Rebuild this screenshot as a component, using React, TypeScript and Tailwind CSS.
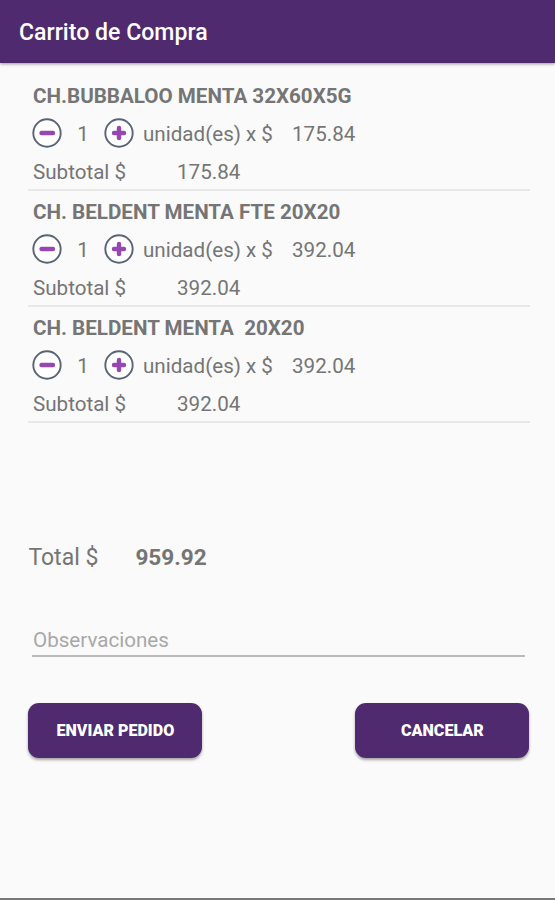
import { useState } from 'react';

type CartItem = {
    name: string;
    price: number;
    quantity: number;
};

const initialItems: CartItem[] = [
    { name: 'CH.BUBBALOO MENTA 32X60X5G', price: 175.84, quantity: 1 },
    { name: 'CH. BELDENT MENTA FTE 20X20', price: 392.04, quantity: 1 },
    { name: 'CH. BELDENT MENTA  20X20', price: 392.04, quantity: 1 },
];

const RoundIcon = ({ plus = false }: { plus?: boolean }) => (
    <svg viewBox="0 0 30 30" className="size-[30px]" fill="none">
        <circle cx="15" cy="15" r="13.7" fill="#fff" stroke="#596476" strokeWidth="1.9" />
        <path d={plus ? 'M10 15h10M15 10v10' : 'M9.5 15h11.5'} stroke="#9547b2" strokeWidth="4.4" strokeLinecap="round" />
    </svg>
);

const CartRow = ({ item, onChange }: { item: CartItem, onChange: (delta: number) => void }) => {
    return (
        <li className="h-[116px] border-b-2 border-[#e8e8e8] pl-[5px] pt-[7.5px]">
            <h2 className="h-[29px] whitespace-pre text-[20.6px] font-bold leading-[29px]">{item.name}</h2>
            <div className="flex h-[43px] items-center">
                <button aria-label="Quitar" className="-ml-px" onClick={() => onChange(-1)}>
                    <RoundIcon />
                </button>
                <span className="w-[42px] pt-[3px] text-center">{item.quantity}</span>
                <button aria-label="Agregar" onClick={() => onChange(1)}>
                    <RoundIcon plus />
                </button>
                <span className="ml-[9px] w-[149px] pt-[3px]">unidad(es) x $</span>
                <span className="pt-[3px]">{item.price.toFixed(2)}</span>
            </div>
            <div className="flex h-[34px] items-center pt-[3px]">
                <span className="w-36">Subtotal $</span>
                <span>{(item.price * item.quantity).toFixed(2)}</span>
            </div>
        </li>
    );
};

const App = () => {
    const [items, setItems] = useState(initialItems);
    const total = items.reduce((sum, item) => sum + item.price * item.quantity, 0);

    const changeQuantity = (index: number, delta: number) => {
        setItems(items.map((item, i) => (
            i === index ? { ...item, quantity: Math.max(1, item.quantity + delta) } : item
        )));
    };

    return (
        <div className="flex h-[900px] w-[555px] flex-col border-b-2 border-[#777] bg-[#fafafa] font-['Roboto',sans-serif] text-[20.6px] text-[#757575]">
            <header className="flex h-[63px] shrink-0 items-center bg-[#4f2a6e] pl-[19px] pt-[3px] text-[23.1px] font-medium text-white shadow-[0_1px_3px_rgba(0,0,0,0.4)]">
                <h1>Carrito de Compra</h1>
            </header>
            <main className="flex flex-col pl-[28.4px] pt-[11.5px]">
                <ul className="-ml-[0.4px] h-[453.5px] w-[501.5px]">
                    {items.map((item, index) => (
                        <CartRow key={item.name} item={item} onChange={(delta) => changeQuantity(index, delta)} />
                    ))}
                </ul>
                <div className="flex h-[58px] items-center pt-0.5 text-[23px]">
                    <span className="w-[107px]">Total $</span>
                    <span className="text-[22.6px] font-bold">{total.toFixed(2)}</span>
                </div>
                <input
                    placeholder="Observaciones"
                    className="ml-1 mt-[37px] h-[33.5px] w-[492.5px] border-b-2 border-[#bababa] pl-[0.6px] pt-0.5 outline-none placeholder:text-[#a8a8a8]"
                />
                <div className="mt-[46px] flex w-[501px] justify-between">
                    <button className="h-[55px] w-[174px] rounded-[11px] bg-[#4f2a6e] pt-0.5 text-[16.1px] font-black text-white shadow-[0_2px_3px_rgba(0,0,0,0.35)]">ENVIAR PEDIDO</button>
                    <button className="h-[55px] w-[174px] rounded-[11px] bg-[#4f2a6e] pt-0.5 text-[16.1px] font-black text-white shadow-[0_2px_3px_rgba(0,0,0,0.35)]">CANCELAR</button>
                </div>
            </main>
        </div>
    );
};

export default App;
